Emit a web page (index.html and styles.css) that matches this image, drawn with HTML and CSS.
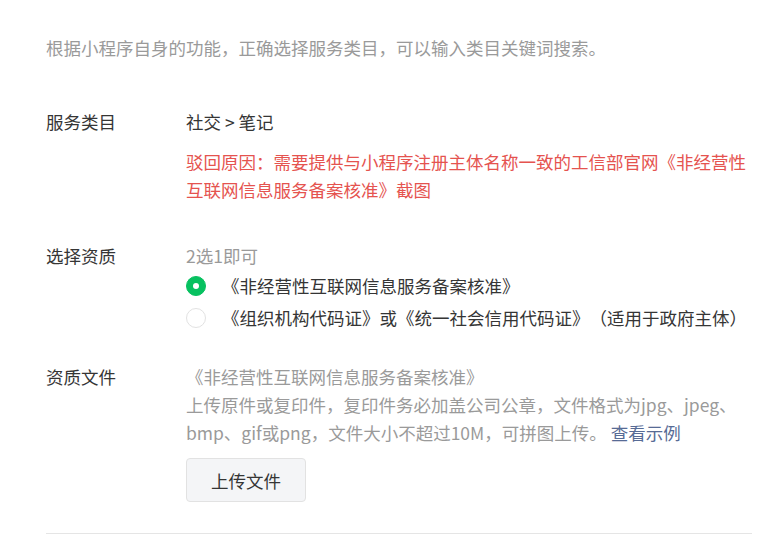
FILE: index.html
```html
<!DOCTYPE html>
<html lang="zh-CN">

<head>
    <meta charset="UTF-8">
    <meta name="viewport" content="width=device-width, initial-scale=1.0">
    <title>服务类目</title>
    <link rel="stylesheet" href="styles.css">
</head>

<body>
    <div class="panel">
        <p class="intro">根据小程序自身的功能，正确选择服务类目，可以输入类目关键词搜索。</p>

        <div class="row row-category">
            <div class="label">服务类目</div>
            <div class="value">
                <div>社交 &gt; 笔记</div>
                <div class="reject">驳回原因：需要提供与小程序注册主体名称一致的工信部官网《非经营性互联网信息服务备案核准》截图</div>
            </div>
        </div>

        <div class="row row-cert">
            <div class="label">选择资质</div>
            <div class="value">
                <div class="hint">2选1即可</div>
                <label class="radio">
                    <span class="dot checked"></span>
                    <span>《非经营性互联网信息服务备案核准》</span>
                </label>
                <label class="radio">
                    <span class="dot"></span>
                    <span>《组织机构代码证》或《统一社会信用代码证》（适用于政府主体）</span>
                </label>
            </div>
        </div>

        <div class="row row-file">
            <div class="label">资质文件</div>
            <div class="value">
                <p class="desc">《非经营性互联网信息服务备案核准》</p>
                <p class="desc">上传原件或复印件，复印件务必加盖公司公章，文件格式为jpg、jpeg、bmp、gif或png，文件大小不超过10M，可拼图上传。 <a href="#" class="link">查看示例</a></p>
                <button class="upload">上传文件</button>
            </div>
        </div>

        <div class="divider"></div>
    </div>
</body>

</html>
```

FILE: styles.css
```css
* {
    margin: 0;
    padding: 0;
    box-sizing: border-box;
}

body {
    background-color: #fff;
    font-family: "Noto Sans CJK SC", "Noto Sans", sans-serif;
    font-size: 17.5px;
    line-height: 28px;
    color: #353535;
    text-spacing-trim: space-all;
}

.panel {
    width: 706px;
    margin-left: 46px;
    padding-top: 34px;
}

.intro {
    color: #9a9a9a;
}

.row {
    display: flex;
}

.label {
    width: 140px;
    flex-shrink: 0;
}

.value {
    flex: 1;
}

.row-category {
    margin-top: 46px;
}

.reject {
    margin-top: 12px;
    color: #e5534f;
}

.row-cert {
    margin-top: 38px;
}

.hint {
    color: #9a9a9a;
}

.radio {
    display: flex;
    align-items: center;
    height: 32px;
    gap: 16px;
}

.dot {
    width: 20px;
    height: 20px;
    border-radius: 50%;
    border: 1px solid #e2e2e2;
    background-color: #fff;
    flex-shrink: 0;
    display: flex;
    justify-content: center;
    align-items: center;
}

.dot.checked {
    background-color: #07c160;
    border-color: #07c160;
}

.dot.checked::after {
    content: "";
    width: 6px;
    height: 6px;
    border-radius: 50%;
    background-color: #fff;
}

.row-file {
    margin-top: 29px;
}

.desc {
    color: #9a9a9a;
}

.link {
    color: #576b95;
    text-decoration: none;
}

.upload {
    display: block;
    margin-top: 11px;
    width: 120px;
    height: 44px;
    font-family: inherit;
    font-size: 17.5px;
    color: #353535;
    background-color: #f4f5f7;
    border: 1px solid #e2e2e2;
    border-radius: 4px;
}

.divider {
    margin-top: 31px;
    height: 1px;
    background-color: #e5e5e5;
}
```
